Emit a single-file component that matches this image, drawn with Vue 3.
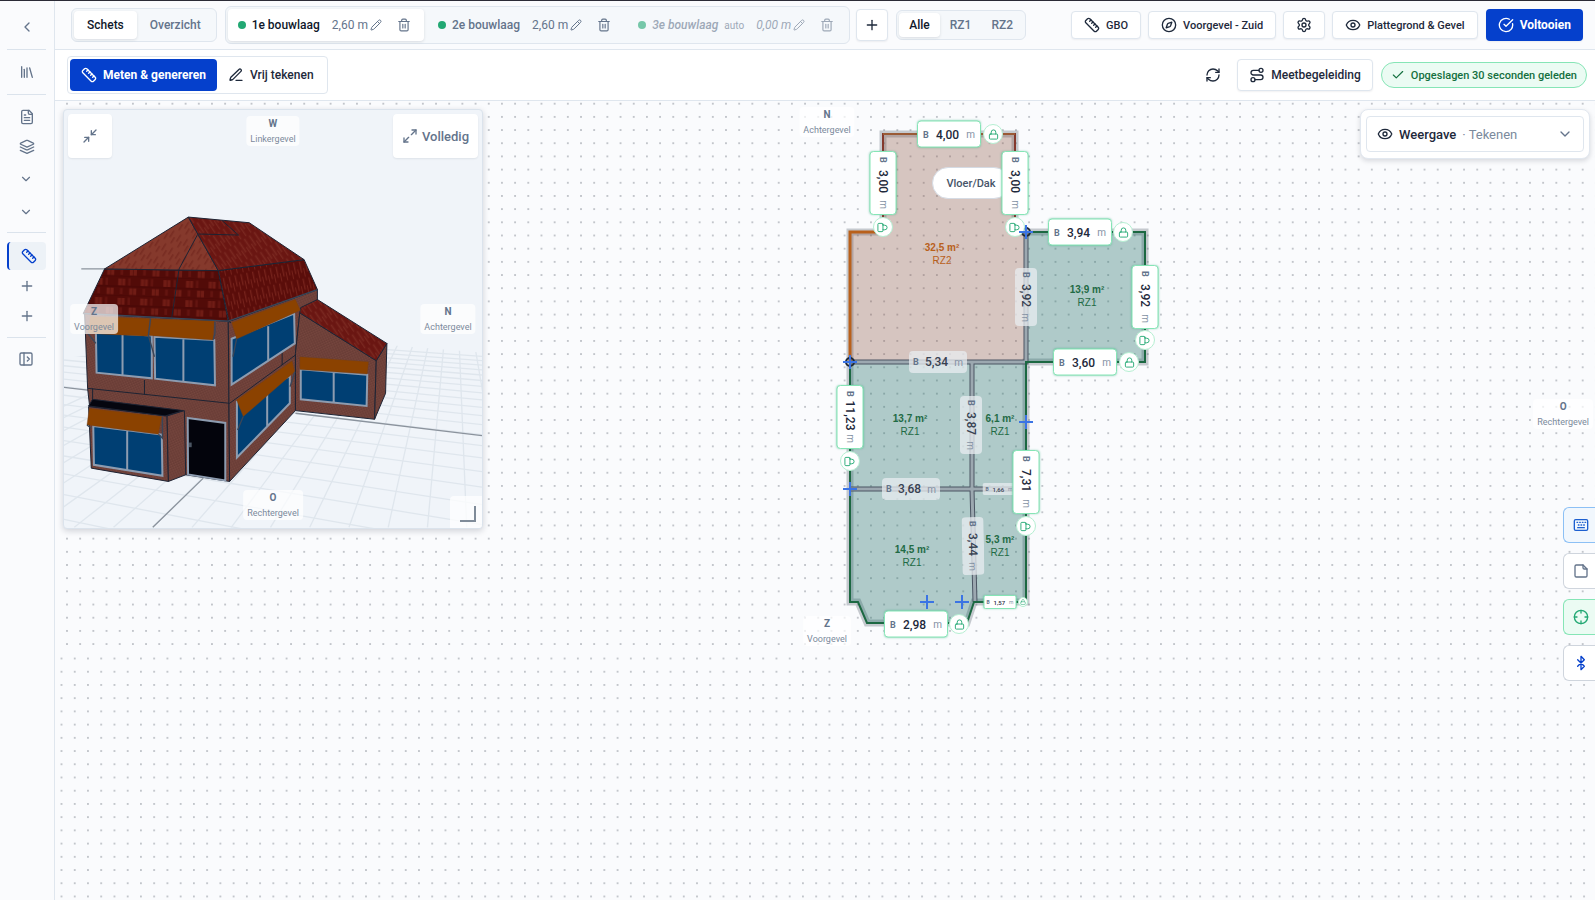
<script setup>
import { h, ref } from 'vue'

const glyphs = {
  chevronLeft: ['M15 18l-6-6 6-6'],
  chevronDown: ['M6 9l6 6 6-6'],
  library: ['M16 6l4 14', 'M12 6v14', 'M8 8v12', 'M4 4v16'],
  doc: ['M15 2H6a2 2 0 0 0-2 2v16a2 2 0 0 0 2 2h12a2 2 0 0 0 2-2V7Z', 'M14 2v4a2 2 0 0 0 2 2h4', 'M10 9H8', 'M16 13H8', 'M16 17H8'],
  layers: ['M12.8 2.2a2 2 0 0 0-1.6 0L2.6 6.1a1 1 0 0 0 0 1.8l8.6 3.9a2 2 0 0 0 1.6 0l8.6-3.9a1 1 0 0 0 0-1.8Z', 'M22 12l-9.2 4.2a2 2 0 0 1-1.6 0L2 12', 'M22 17l-9.2 4.2a2 2 0 0 1-1.6 0L2 17'],
  ruler: ['M21.300 15.300a2.400 2.400 0 0 1 0 3.400l-2.600 2.600a2.400 2.400 0 0 1-3.400 0L2.700 8.700a2.400 2.400 0 0 1 0-3.400l2.600-2.600a2.400 2.400 0 0 1 3.400 0Z', 'M14.500 12.500l2-2', 'M11.500 9.500l2-2', 'M8.500 6.500l2-2', 'M17.500 15.500l2-2'],
  plus: ['M5 12h14', 'M12 5v14'],
  panel: ['M5 3h14a2 2 0 0 1 2 2v14a2 2 0 0 1-2 2H5a2 2 0 0 1-2-2V5a2 2 0 0 1 2-2z', 'M9 3v18', 'M14 9l3 3-3 3'],
  pencil: ['M21.2 6.8a1 1 0 0 0-4-4L3.800 16.200a2 2 0 0 0-.5.8L2 21.400a.5.5 0 0 0 .6.6l4.400-1.300a2 2 0 0 0 .8-.5z', 'M15 5l4 4'],
  pen: ['M12 20h9', 'M16.400 3.600a1 1 0 0 1 3 3L7.400 18.600a2 2 0 0 1-.9.5l-2.900.8a.5.5 0 0 1-.6-.6l.8-2.900a2 2 0 0 1 .5-.9z'],
  trash: ['M3 6h18', 'M19 6v14a2 2 0 0 1-2 2H7a2 2 0 0 1-2-2V6', 'M8 6V4a2 2 0 0 1 2-2h4a2 2 0 0 1 2 2v2', 'M10 11v6', 'M14 11v6'],
  compass: ['M12 2a10 10 0 1 0 0 20a10 10 0 1 0 0-20z', 'M16.200 7.800l-1.800 5.400a2 2 0 0 1-1.200 1.200l-5.400 1.800l1.800-5.400a2 2 0 0 1 1.200-1.200z'],
  gear: ['M9.700 4.100a2.340 2.340 0 0 1 4.660 0a2.340 2.340 0 0 0 3.320 1.920a2.340 2.340 0 0 1 2.330 4.030a2.340 2.340 0 0 0 0 3.830a2.340 2.340 0 0 1-2.330 4.030a2.340 2.340 0 0 0-3.320 1.920a2.340 2.340 0 0 1-4.660 0a2.340 2.340 0 0 0-3.320-1.920a2.340 2.340 0 0 1-2.330-4.030a2.340 2.340 0 0 0 0-3.830a2.340 2.340 0 0 1 2.330-4.030a2.340 2.340 0 0 0 3.320-1.920', 'M12 9a3 3 0 1 0 0 6a3 3 0 1 0 0-6z'],
  eye: ['M2.100 12.350a1 1 0 0 1 0-.7a10.750 10.750 0 0 1 19.880 0a1 1 0 0 1 0 .7a10.750 10.750 0 0 1-19.880 0', 'M12 9a3 3 0 1 0 0 6a3 3 0 1 0 0-6z'],
  circleCheck: ['M21.800 10A10 10 0 1 1 17 3.340', 'M9 11l3 3L22 4'],
  refresh: ['M3 12a9 9 0 0 1 9-9a9.750 9.750 0 0 1 6.740 2.740L21 8', 'M21 3v5h-5', 'M21 12a9 9 0 0 1-9 9a9.750 9.750 0 0 1-6.740-2.740L3 16', 'M8 16H3v5'],
  route: ['M6 16a3 3 0 1 0 0 6a3 3 0 1 0 0-6z', 'M9 19h8.500a3.500 3.500 0 0 0 0-7h-11a3.500 3.500 0 0 1 0-7H15', 'M18 2a3 3 0 1 0 0 6a3 3 0 1 0 0-6z'],
  check: ['M20 6L9 17l-5-5'],
  shrink: ['M20 10h-6V4', 'M14 10l7-7', 'M4 14h6v6', 'M3 21l7-7'],
  grow: ['M15 3h6v6', 'M21 3l-7 7', 'M9 21H3v-6', 'M3 21l7-7'],
  lock: ['M5 11h14a2 2 0 0 1 2 2v7a2 2 0 0 1-2 2H5a2 2 0 0 1-2-2v-7a2 2 0 0 1 2-2z', 'M7 11V7a5 5 0 0 1 10 0v4'],
  keyboard: ['M4 4h16a2 2 0 0 1 2 2v12a2 2 0 0 1-2 2H4a2 2 0 0 1-2-2V6a2 2 0 0 1 2-2z', 'M6 8h1', 'M10 8h1', 'M14 8h1', 'M18 8h1', 'M8 12h1', 'M12 12h1', 'M16 12h1', 'M7 16h10'],
  note: ['M15 3H5a2 2 0 0 0-2 2v14a2 2 0 0 0 2 2h14a2 2 0 0 0 2-2V9z', 'M15 3v4a2 2 0 0 0 2 2h4'],
  target: ['M12 2a10 10 0 1 0 0 20a10 10 0 1 0 0-20z', 'M22 12h-4', 'M6 12H2', 'M12 6V2', 'M12 22v-4'],
  bluetooth: ['M7 7l10 10l-5 5V2l5 5L7 17']
}

const Icon = (p) =>
  h(
    'svg',
    { width: p.size || 16, height: p.size || 16, viewBox: '0 0 24 24', fill: 'none', stroke: 'currentColor', 'stroke-width': 2, 'stroke-linecap': 'round', 'stroke-linejoin': 'round', 'aria-hidden': 'true' },
    glyphs[p.name].map((d) => h('path', { d }))
  )
Icon.props = ['name', 'size']

const floors = [
  { name: '1e bouwlaag', height: '2,60 m', active: true },
  { name: '2e bouwlaag', height: '2,60 m' },
  { name: '3e bouwlaag', height: '0,00 m', auto: true }
]

/* Drawing coordinates share one origin: the top-left corner of the canvas is (55, 101). */
const ox = 55
const oy = 101
const at = (m) => ({ left: m.x - ox + 'px', top: m.y - oy + 'px', '--turn': (m.turn || 0) + 'deg' })

const sizes = ref([
  { v: '5,34', x: 938, y: 362, inner: true },
  { v: '3,92', x: 1026, y: 297, turn: 90, inner: true },
  { v: '3,87', x: 971, y: 425, turn: 90, inner: true },
  { v: '3,68', x: 911, y: 489, inner: true },
  { v: '3,44', x: 973, y: 546, turn: 89, inner: true },
  { v: '1,66', x: 999, y: 489, inner: true, small: true },
  { v: '4,00', x: 949, y: 134 },
  { v: '3,00', x: 883, y: 183, turn: 90 },
  { v: '3,00', x: 1015, y: 183, turn: 90 },
  { v: '3,94', x: 1080, y: 232 },
  { v: '3,92', x: 1145, y: 297, turn: 90 },
  { v: '3,60', x: 1085, y: 362 },
  { v: '11,23', x: 850, y: 417, turn: 90 },
  { v: '7,31', x: 1026, y: 482, turn: 90 },
  { v: '2,98', x: 916, y: 624 },
  { v: '1,57', x: 1000, y: 602, small: true }
])
const locks = [
  { x: 993, y: 134 },
  { x: 883, y: 227, turn: 90 },
  { x: 1015, y: 227, turn: 90 },
  { x: 1123, y: 232 },
  { x: 1145, y: 340, turn: 90 },
  { x: 1129, y: 362 },
  { x: 850, y: 461, turn: 90 },
  { x: 1026, y: 526, turn: 90 },
  { x: 959, y: 624 },
  { x: 1023, y: 602, small: true }
]
const rooms = [
  { a: '32,5 m²', z: 'RZ2', x: 942, y: 254, roof: true },
  { a: '13,9 m²', z: 'RZ1', x: 1087, y: 296 },
  { a: '13,7 m²', z: 'RZ1', x: 910, y: 425 },
  { a: '6,1 m²', z: 'RZ1', x: 1000, y: 425 },
  { a: '14,5 m²', z: 'RZ1', x: 912, y: 556 },
  { a: '5,3 m²', z: 'RZ1', x: 1000, y: 546 }
]
const sides = [
  { d: 'N', t: 'Achtergevel', x: 827, y: 122 },
  { d: 'Z', t: 'Voorgevel', x: 827, y: 631 }
]
const crosses = [
  [1026, 232], [850, 362], [1026, 422], [850, 489], [927, 602], [962, 602]
]
const tools = ['keyboard', 'note', 'target', 'bluetooth']
const toolNames = ['Toetsenbord', 'Notitie', 'Centreren', 'Bluetooth']

/* Ground plane in one-point-per-axis perspective, horizon at y = 380. */
const ground = []
for (let i = -9; i <= 16; i++) ground.push({ x1: 1200, y1: 380, x2: 293 + i * 118, y2: 1283 })
for (let j = -12; j <= 10; j++) {
  const depth = 1 / (1 / 560 - j * 0.00009)
  const slope = depth / (722 + 4165)
  ground.push({ x1: 26, y1: 380 + slope * 4191, x2: 1283, y2: 380 + slope * 5448 })
}
</script>

<template>
  <div class="app">
    <nav class="rail" aria-label="Navigatie">
      <button class="back" aria-label="Terug"><Icon name="chevronLeft" /></button>
      <div class="rail-group one"><button aria-label="Bibliotheek"><Icon name="library" /></button></div>
      <div class="rail-group four">
        <button aria-label="Document"><Icon name="doc" /></button>
        <button aria-label="Lagen"><Icon name="layers" /></button>
        <button class="more" aria-label="Meer"><Icon name="chevronDown" size="14" /></button>
        <button class="more" aria-label="Meer"><Icon name="chevronDown" size="14" /></button>
      </div>
      <div class="rail-group three">
        <button class="current" aria-label="Opname"><Icon name="ruler" /></button>
        <button aria-label="Toevoegen"><Icon name="plus" /></button>
        <button aria-label="Toevoegen"><Icon name="plus" /></button>
      </div>
      <div class="rail-group last"><button aria-label="Paneel openen"><Icon name="panel" /></button></div>
    </nav>

    <main class="main">
      <header class="top">
        <div class="seg views">
          <button class="on">Schets</button>
          <button>Overzicht</button>
        </div>
        <div class="seg floors">
          <div v-for="f in floors" :key="f.name" class="floor" :class="{ on: f.active, auto: f.auto }">
            <button class="floor-name"><i class="dot"></i>{{ f.name }}<small v-if="f.auto">auto</small></button>
            <button class="floor-height">{{ f.height }}<Icon name="pencil" size="12" /></button>
            <button class="bin" aria-label="Verwijderen"><Icon name="trash" size="14" /></button>
          </div>
        </div>
        <button class="btn add" aria-label="Bouwlaag toevoegen"><Icon name="plus" /></button>
        <div class="seg zones">
          <button class="on">Alle</button>
          <button>RZ1</button>
          <button>RZ2</button>
        </div>
        <div class="actions">
          <button class="btn"><Icon name="ruler" />GBO</button>
          <button class="btn"><Icon name="compass" />Voorgevel - Zuid</button>
          <button class="btn" aria-label="Instellingen"><Icon name="gear" /></button>
          <button class="btn"><Icon name="eye" />Plattegrond &amp; Gevel</button>
          <button class="btn primary"><Icon name="circleCheck" />Voltooien</button>
        </div>
      </header>

      <div class="bar">
        <div class="modes">
          <button class="on"><Icon name="ruler" />Meten &amp; genereren</button>
          <button><Icon name="pen" />Vrij tekenen</button>
        </div>
        <button class="plain" aria-label="Vernieuwen"><Icon name="refresh" /></button>
        <button class="btn guide"><Icon name="route" />Meetbegeleiding</button>
        <span class="saved"><Icon name="check" size="14" />Opgeslagen 30 seconden geleden</span>
      </div>

      <section class="canvas" aria-label="Plattegrond">
        <svg class="dots" aria-hidden="true">
          <defs>
            <pattern id="fine" x="5.400" y="-3.900" width="13.180" height="13.180" patternUnits="userSpaceOnUse"><circle cx="6.590" cy="6.590" r="1" /></pattern>
            <pattern id="coarse" x="-0.100" y="550.900" width="13.240" height="13.220" patternUnits="userSpaceOnUse"><circle cx="6.590" cy="6.590" r="1" /></pattern>
          </defs>
          <rect width="100%" height="550" fill="url(#fine)" />
          <rect y="550" width="100%" height="100%" fill="url(#coarse)" />
        </svg>

        <svg class="plan" width="1540" height="799" viewBox="55 101 1540 799" aria-hidden="true">
          <path class="shade" d="M883 134H1015V232H1145V362H1026V602H974L967 623H867L858 602H850V232H883Z" />
          <path class="zone-b" d="M883 134H1015V232H1026V362H850V232H883Z" />
          <path class="zone-a" d="M1026 232H1145V362H1026Z" />
          <path class="zone-a" d="M850 362H1026V602H974L967 623H867L858 602H850Z" />
          <path class="inner-edge" d="M850 362H1026V232M972 362V489L975 602M850 489H1026" />
          <path class="inner-core" d="M850 362H1026V232M972 362V489L975 602M850 489H1026" />
          <path class="edge green" d="M1026 232H1145V362H1026V602H974L967 623H867L858 602H850V362" />
          <path class="edge brown" d="M883 232V134H1015V232" />
          <path class="edge orange" d="M883 232H850V362" />
          <path class="edge top-line" d="M883 134H1015" />
          <circle class="node" cx="1026" cy="232" r="4" />
          <circle class="node" cx="850" cy="362" r="4" />
        </svg>

        <div v-for="s in sides" :key="s.d" class="side" :style="at(s)"><b>{{ s.d }}</b>{{ s.t }}</div>
        <div class="side east"><b>O</b>Rechtergevel</div>
        <div v-for="r in rooms" :key="r.a" class="room" :class="{ roof: r.roof }" :style="at(r)"><b>{{ r.a }}</b>{{ r.z }}</div>
        <button class="chip" :style="at({ x: 971, y: 183 })">Vloer/Dak</button>
        <label v-for="(s, i) in sizes" :key="i" class="size" :class="{ inner: s.inner, small: s.small }" :style="at(s)">
          <span>B</span><input v-model="s.v" aria-label="Breedte in meter" /><em>m</em>
        </label>
        <button v-for="(l, i) in locks" :key="'l' + i" class="lock" :class="{ small: l.small }" :style="at(l)" aria-label="Maat vergrendeld"><Icon name="lock" :size="l.small ? 6 : 11" /></button>
        <svg class="plan" width="1540" height="799" viewBox="55 101 1540 799" aria-hidden="true">
          <path v-for="(c, i) in crosses" :key="i" class="cross" :d="`M${c[0] - 7} ${c[1]}h14M${c[0]} ${c[1] - 7}v14`" />
        </svg>

        <div class="model">
          <svg class="scene" viewBox="26 28 1257 1257" role="img" aria-label="3D-model van de woning">
            <defs>
              <pattern id="tile" width="68" height="58" patternUnits="userSpaceOnUse" patternTransform="rotate(2)">
                <rect width="68" height="58" fill="#520b08" />
                <path d="M4 6h10v20H4zM16 6h9v20h-9zM38 34h9v20h-9zM49 34h10v20H49z" fill="#701c15" />
                <path d="M34 4h7v22h-7zM10 34h8v18h-8z" fill="#631410" />
                <path d="M0 29h68M0 58h68" stroke="#3f0605" stroke-width="2" />
              </pattern>
              <pattern id="tileSide" width="18" height="52" patternUnits="userSpaceOnUse" patternTransform="rotate(-12)">
                <rect width="18" height="52" fill="#5a0d0a" />
                <path d="M3 2h4v34H3zM12 24h3v26h-3z" fill="#75221b" />
              </pattern>
              <pattern id="tileTop" width="18" height="60" patternUnits="userSpaceOnUse" patternTransform="rotate(-34)">
                <rect width="18" height="60" fill="#6a1612" />
                <path d="M2 2h5v36H2zM12 26h4v32h-4z" fill="#7a2820" />
              </pattern>
              <pattern id="tileLight" width="24" height="46" patternUnits="userSpaceOnUse" patternTransform="rotate(32)">
                <rect width="24" height="46" fill="#85392c" />
                <path d="M3 4h5v24H3zM15 20h5v22h-5z" fill="#782c22" />
              </pattern>
              <pattern id="brick" width="10" height="10" patternUnits="userSpaceOnUse" patternTransform="rotate(20)">
                <rect width="10" height="10" fill="#6e4039" />
                <path d="M1 2h4M6 7h3" stroke="#7c4c43" stroke-width="2" />
                <path d="M6 3h3M1 8h3" stroke="#5f342e" stroke-width="2" />
              </pattern>
              <clipPath id="floor"><path d="M26 775L250 740L1000 735L1283 757V1285H26Z" /></clipPath>
            </defs>
            <g clip-path="url(#floor)" class="ground">
              <line v-for="(g, i) in ground" :key="i" v-bind="g" />
            </g>
            <path class="axis" d="M26 862L110 872M722 940L1283 1007M445 1135L293 1283M78 506H150" />
            <g class="solid">
              <path fill="url(#brick)" d="M88 640L520 663L524 1145L392 1125L112 1000L97 865Z" />
              <path fill="url(#brick)" d="M520 663L788 568V600L735 638L722 760V932L524 1145Z" />
              <path fill="url(#brick)" d="M735 638L965 782L960 958L722 932V760Z" />
              <path fill="url(#brick)" d="M965 782L997 730L993 880L960 958Z" />
              <path fill="url(#tileTop)" d="M788 598L997 730L965 782L735 638L738 622Z" />
              <path fill="url(#tile)" d="M148 506L490 511L520 663L84 640Z" />
              <path fill="url(#tileSide)" d="M490 511L748 478L788 568L522 664Z" />
              <path fill="url(#tileLight)" d="M400 350L148 506L490 511Z" />
              <path fill="url(#tileTop)" d="M400 350L583 367L748 478L490 511Z" />
              <path fill="none" d="M428 402L372 506L350 652M430 401L551 404L502 361M97 865L524 910L722 765M268 840V884M682 758V795M520 663L528 668M112 865V905" />
              <path fill="url(#brick)" d="M100 920L336 948L340 1145L108 1105Z" />
              <path fill="url(#brick)" d="M336 948L388 932L392 1125L340 1145Z" />
              <path fill="#05060f" d="M112 898L385 932L330 948L100 918Z" />
            </g>
            <g class="glass">
              <path d="M122 696L290 706V835L124 818ZM202 704V825M298 710L478 720L480 856L300 836ZM385 716V845" />
              <path d="M530 716L718 640L720 730L530 854ZM640 678V780" />
              <path d="M546 905L705 828V910L546 1073ZM637 870V978" />
              <path d="M738 808L938 824L936 918L738 898ZM837 816V906" />
              <path d="M114 978L320 1004L322 1128L116 1095ZM216 992V1112" />
            </g>
            <path class="door" d="M398 954L511 969V1142L399 1124Z" />
            <path d="M402 1028h8v14h-8z" fill="#4b5563" />
            <g class="awning">
              <path d="M105 648L285 655L278 708L98 700Z" />
              <path d="M288 656L478 662L474 720L281 706Z" />
              <path d="M530 667L722 597L737 630L545 717Z" />
              <path d="M545 900L712 782L720 815L565 950Z" />
              <path d="M735 770L942 785L938 822L735 808Z" />
              <path d="M102 925L320 950L310 1003L95 975Z" />
            </g>
            <path class="rods" d="M98 700L122 730M286 655L280 706L298 770M474 720L480 700V665M545 717L534 770M565 950L548 990M720 815L706 860M310 1003L322 1015V950M95 975L108 985M84 640L520 663L788 568" />
          </svg>
          <button class="tile shrink" aria-label="Verkleinen"><Icon name="shrink" /></button>
          <button class="tile full"><Icon name="grow" />Volledig</button>
          <div class="side west-side"><b>W</b>Linkergevel</div>
          <div class="side south-side"><b>Z</b>Voorgevel</div>
          <div class="side north-side"><b>N</b>Achtergevel</div>
          <div class="side east-side"><b>O</b>Rechtergevel</div>
          <span class="grip"></span>
        </div>

        <div class="display">
          <button><Icon name="eye" /><b>Weergave</b><span>· Tekenen</span><Icon name="chevronDown" class="caret" /></button>
        </div>
        <div class="dock">
          <button v-for="(t, i) in tools" :key="t" :class="t" :aria-label="toolNames[i]"><Icon :name="t" /></button>
        </div>
      </section>
    </main>
  </div>
</template>

<style>
body { margin: 0; }
</style>

<style scoped>
* { box-sizing: border-box; }
.app {
  display: flex;
  height: 100vh;
  border-top: 1px solid #2b2b36;
  background: #fafbfd;
  color: #1e293b;
  font-family: Roboto, "Noto Sans", sans-serif;
  font-size: 12px;
  overflow: hidden;
}
button, input { font: inherit; color: inherit; margin: 0; padding: 0; border: 0; background: none; }
button { display: flex; align-items: center; justify-content: center; cursor: pointer; white-space: nowrap; }
svg { flex: none; }

.rail { width: 55px; flex: none; padding: 0 8px 0 7px; border-right: 1px solid #dfe6ee; color: #64748b; display: flex; flex-direction: column; }
.rail button { width: 100%; height: 30px; }
.rail .back { height: 48px; padding-top: 4px; }
.rail-group { border-top: 1px solid #dbe3ec; }
.one { padding: 7px 0; }
.four { padding: 7px 0 4px; }
.rail .more { height: 32px; padding: 2px 2px 0 0; }
.four .more:last-child { height: 34px; }
.three { padding: 9px 0 6px; }
.three .current { height: 28px; border-radius: 4px; border-left: 2px solid #0540cc; background: #edf2f7; color: #0540cc; margin-bottom: 1px; padding-left: 2px; }
.last { padding: 6px 2px 0 0; }

.main { flex: 1; min-width: 0; display: flex; flex-direction: column; }
.top { height: 49px; flex: none; display: flex; align-items: center; padding: 0 12px 0 16px; border-bottom: 1px solid #dfe6ee; }
.seg { display: flex; align-items: center; padding: 2px; border: 1px solid #dfe6ee; border-radius: 6px; background: #f5f8fb; color: #64748b; font-weight: 500; }
.seg .on { background: #fff; color: #0f172a; box-shadow: 0 1px 3px rgba(15, 23, 42, .12); border-radius: 4px; }
.views { height: 34px; }
.views button { height: 28px; padding: 0 13px; }
.floors { height: 38px; margin-left: 8px; gap: 4px; }
.floor { display: flex; align-items: center; height: 32px; padding: 0 12px 0 10px; }
.floor-name { gap: 6px; }
.floor-name small { font-size: 10px; font-weight: 400; }
.floor-height { font-weight: 400; gap: 2px; margin-left: 12px; color: #64748b; }
.bin { margin-left: 14px; width: 16px; color: #64748b; }
.dot { width: 8px; height: 8px; border-radius: 50%; background: #22a873; }
.auto { font-style: italic; opacity: .6; }
.auto small { font-style: normal; }
.btn { gap: 6px; height: 28px; padding: 0 12px; border: 1px solid #dfe6ee; border-radius: 4px; background: #fff; font-size: 11px; font-weight: 500; box-shadow: 0 1px 2px rgba(15, 23, 42, .06); }
.add { width: 32px; height: 32px; padding: 0; margin: 0 8px 0 6px; }
.zones { height: 30px; }
.zones button { height: 24px; padding: 0 10px; }
.actions { margin-left: auto; display: flex; align-items: center; gap: 7px; }
.primary { height: 32px; border: 0; background: #0540cc; color: #fff; font-size: 12px; font-weight: 700; margin-left: 1px; }

.bar { height: 51px; flex: none; display: flex; align-items: center; padding: 0 8px 0 12px; background: #fff; border-bottom: 1px solid #dfe6ee; }
.modes { display: flex; padding: 2px; border: 1px solid #dfe6ee; border-radius: 4px; margin-right: auto; }
.modes button { height: 32px; gap: 6px; padding: 0 11px; border-radius: 4px; font-weight: 500; }
.modes .on { background: #0540cc; color: #fff; font-weight: 700; }
.plain { width: 32px; height: 32px; }
.guide { height: 32px; font-size: 12px; margin: 0 8px; padding: 0 11px; }
.saved { display: flex; align-items: center; gap: 6px; height: 26px; padding: 0 9px; border: 1px solid #86e5b6; border-radius: 13px; background: #ebfbf3; color: #14703f; font-size: 11px; font-weight: 500; }

.canvas { position: relative; flex: 1; overflow: hidden; background: #fafbfd; }
.dots { position: absolute; inset: 0; width: 100%; height: 100%; fill: #b4b8be; }
.plan { position: absolute; left: 0; top: 0; fill: none; pointer-events: none; }
.shade { stroke: rgba(75, 85, 99, .3); stroke-width: 7; }
.zone-a { fill: rgba(33, 113, 103, .35); }
.zone-b { fill: rgba(140, 84, 64, .32); }
.inner-edge { stroke: #4b5563; stroke-width: 5; }
.inner-core { stroke: #9ca8b0; stroke-width: 3; }
.edge { stroke-width: 2; }
.green { stroke: #1c6842; }
.brown { stroke: #84392d; }
.orange { stroke: #b9601b; stroke-width: 3; }
.top-line { stroke: #9a5a35; }
.node { stroke: #1f2937; stroke-width: 2; }
.cross { stroke: #3b74e4; stroke-width: 2; }

.side { position: absolute; transform: translate(-50%, -50%); display: flex; flex-direction: column; align-items: center; height: 30px; padding: 0 4px; border-radius: 4px; background: rgba(255, 255, 255, .7); color: #7b8a9c; font-size: 9px; line-height: 14px; white-space: nowrap; }
.side b { font-size: 10px; line-height: 16px; font-weight: 700; color: #64748b; }
.east { right: 2px; top: 298px; transform: none; }
.room { position: absolute; transform: translate(-50%, -50%); text-align: center; font: 10px/13px "Liberation Sans", sans-serif; color: #1f6b45; white-space: nowrap; }
.room b { display: block; }
.roof { color: #b9601b; }
.chip { position: absolute; transform: translate(-50%, -50%); width: 78px; height: 32px; border: 1px solid #d5dbe4; border-radius: 16px; background: #fff; color: #475569; font-size: 11px; font-weight: 500; }
.size { position: absolute; transform: translate(-50%, -50%) rotate(var(--turn)); display: flex; align-items: center; justify-content: space-between; width: 64px; height: 27px; padding: 0 5px; border: 1px solid #86e5b6; border-radius: 4px; background: #fff; color: #64748b; font-size: 9px; font-weight: 700; box-shadow: 0 0 2px rgba(34, 168, 115, .4); }
.size input { width: 34px; min-width: 0; text-align: center; font-size: 12px; font-weight: 500; color: #1e293b; }
.size em { font-style: normal; font-size: 10px; font-weight: 400; color: #8492a4; }
.size.inner { width: 58px; height: 22px; padding: 0 3px; border-color: transparent; background: rgba(232, 236, 240, .75); box-shadow: none; }
.size.inner input { color: #374151; }
.size.small { width: 33px; height: 14px; padding: 0 2px; font-size: 5px; border-radius: 2px; }
.size.small input { width: 17px; font-size: 6px; }
.size.small em { font-size: 5px; }
.size.inner.small { height: 12px; }
.lock { position: absolute; transform: translate(-50%, -50%) rotate(var(--turn)); width: 20px; height: 20px; border: 1px solid #b5efd2; border-radius: 50%; background: #fff; color: #22a873; }
.lock.small { width: 10px; height: 10px; }

.model { position: absolute; left: 8px; top: 8px; width: 420px; height: 420px; border: 1px solid #dbe3ec; border-radius: 4px; background: #f0f4f9; box-shadow: 0 2px 6px rgba(15, 23, 42, .18); overflow: hidden; }
.scene { display: block; width: 100%; height: 100%; }
.ground { stroke: #dfe6ed; stroke-width: 4; }
.axis { fill: none; stroke: #8b939d; stroke-width: 4; }
.solid { stroke: #1d2333; stroke-width: 3; stroke-linejoin: round; }
.glass { fill: #003f73; stroke: #8d9cb0; stroke-width: 6; }
.door { fill: #03040c; stroke: #8d9cb0; stroke-width: 6; }
.awning { fill: #8b4200; stroke: #6b3f24; stroke-width: 1; }
.rods { fill: none; stroke: #3a4658; stroke-width: 4; }
.tile { position: absolute; top: 4px; height: 44px; border-radius: 4px; background: #fff; color: #64748b; box-shadow: 0 1px 2px rgba(15, 23, 42, .08); }
.shrink { left: 4px; width: 44px; }
.full { right: 4px; padding: 0 9px; gap: 4px; font-size: 13px; font-weight: 500; }
.west-side { left: 50%; top: 21px; }
.east-side { left: 50%; top: 395px; }
.south-side { left: 30px; top: 209px; }
.north-side { left: 384px; top: 209px; }
.grip { position: absolute; right: 0; bottom: 0; width: 32px; height: 32px; background: rgba(255, 255, 255, .75); border-radius: 4px 0 0; }
.grip::after { content: ""; position: absolute; right: 6px; bottom: 6px; width: 14px; height: 14px; border: solid #7f8b99; border-width: 0 2px 2px 0; }

.display { position: absolute; right: 5px; top: 8px; width: 230px; padding: 6px 5px; border: 1px solid #e2e8f0; border-radius: 8px; background: #fff; box-shadow: 0 2px 5px rgba(15, 23, 42, .15); font-size: 13px; }
.display button { width: 100%; height: 36px; padding: 0 10px; border: 1px solid #dfe6ee; border-radius: 4px; justify-content: flex-start; gap: 6px; }
.display b { font-weight: 500; }
.display span { color: #7b8a9c; }
.caret { margin-left: auto; color: #64748b; }
.dock { position: absolute; right: 0; top: 406px; display: flex; flex-direction: column; gap: 10px; }
.dock button { width: 32px; height: 36px; padding-left: 3px; border: 1px solid #cfd5dd; border-right: 0; border-radius: 6px 0 0 6px; background: #fff; color: #64748b; }
.dock .keyboard { border-color: #8cc0f5; background: #f1f7fd; color: #1d5fd0; }
.dock .target { border-color: #86e5b6; background: #ebfbf3; color: #22a873; }
.dock .bluetooth { color: #0540cc; }
</style>
